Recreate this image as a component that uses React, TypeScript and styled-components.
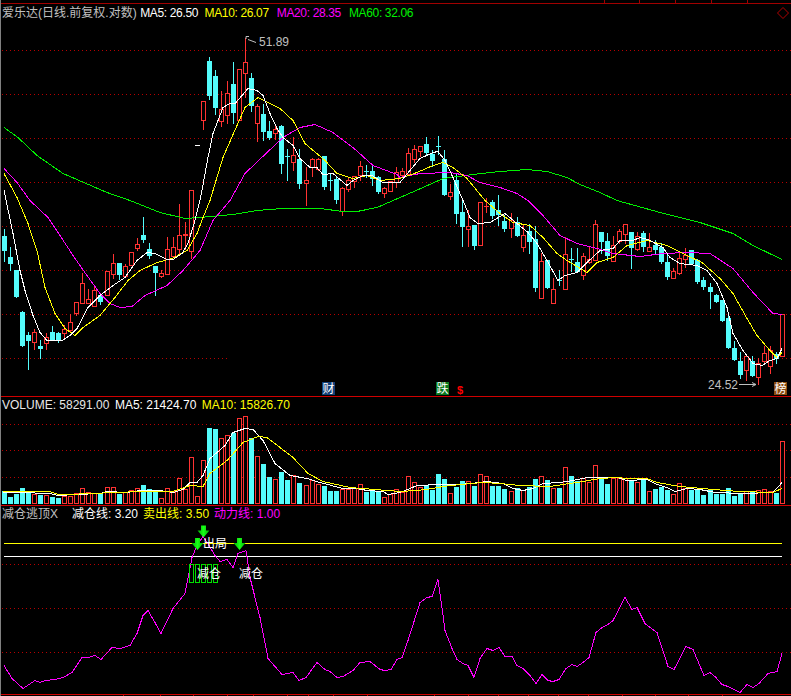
import styled, { createGlobalStyle } from "styled-components";

type Kind = "r" | "c" | "w";
type Candle = [Kind, number, number, number, number];
type Pt = [number, number];

const RED = "#ff3232";
const CYAN = "#54fcfc";
const GRID = "#b80000";
const UI_FONT = `"Liberation Sans", "Noto Sans CJK SC", sans-serif`;

// kind, body top, body bottom, wick top, wick bottom (page pixels)
const candles: Candle[] = [
  ["c",236,251,229,261],["c",257,264,247,270],["c",270,297,270,297],["c",312,346,311,346],["c",335,341,332,369],
  ["r",332,342,329,349],["c",346,349,340,358],["r",337,343,333,349],["c",332,340,326,340],["c",333,340,332,342],
  ["r",329,333,325,339],["r",322,330,314,332],["r",302,313,302,315],["r",283,303,273,303],["r",299,303,289,303],
  ["r",290,306,286,306],["c",295,302,293,304],["r",271,295,271,295],["r",263,274,254,278],["c",263,275,263,279],
  ["r",266,276,264,277],["r",252,265,252,265],["r",244,248,238,250],["c",235,240,217,242],["c",249,256,243,258],
  ["c",266,273,266,295],["r",273,276,270,277],["r",249,274,237,274],["r",247,256,237,257],["r",235,249,204,255],
  ["r",234,235,222,249],["r",190,251,190,258],["w",145,145,145,145],["r",101,120,101,129],["c",61,96,57,99],
  ["c",76,108,70,114],["r",109,121,91,126],["r",93,115,81,123],["c",84,113,62,123],["r",69,120,69,120],
  ["r",62,73,38,97],["c",78,106,73,111],["r",106,123,104,141],["c",114,132,104,140],["c",131,138,121,139],
  ["r",129,133,125,139],["c",126,164,125,173],["c",156,156,149,180],["r",155,162,137,170],["c",159,184,149,188],
  ["r",180,183,167,205],["r",159,167,158,176],["r",159,169,158,170],["c",156,187,156,189],["c",180,180,173,190],
  ["c",179,200,177,203],["r",188,211,187,215],["r",180,189,177,191],["r",176,181,176,187],["r",166,175,161,180],
  ["c",171,171,165,177],["c",171,179,165,185],["c",177,192,176,193],["r",188,193,187,197],["r",181,191,181,191],
  ["r",172,182,167,187],["r",171,175,168,177],["r",153,174,148,175],["r",149,159,145,162],["r",146,151,146,156],
  ["c",144,153,137,154],["c",154,161,150,166],["c",146,146,136,154],["c",159,195,150,195],["r",192,196,184,199],
  ["c",180,214,174,223],["c",212,227,200,246],["r",226,229,210,246],["c",225,246,225,249],["r",202,245,202,245],
  ["r",206,206,198,212],["c",202,216,200,218],["c",210,215,195,225],["c",221,229,215,231],["r",220,228,213,237],
  ["c",222,236,217,236],["r",235,247,224,251],["c",231,242,224,253],["c",239,288,226,291],["r",261,298,253,298],
  ["c",260,288,260,288],["r",289,303,278,303],["c",280,280,270,285],["r",254,289,237,289],["c",259,259,248,271],
  ["c",262,272,248,272],["r",256,275,253,279],["r",259,262,247,263],["r",224,260,220,260],["c",232,242,232,253],
  ["c",241,256,233,260],["r",245,261,236,261],["r",231,241,229,243],["r",224,234,224,243],["c",232,248,232,268],
  ["r",236,249,232,250],["c",233,247,231,251],["r",247,251,233,251],["c",245,250,240,253],["c",247,262,243,263],
  ["c",262,277,253,279],["r",271,278,268,278],["r",258,273,251,274],["r",255,259,248,267],["c",250,264,250,264],
  ["c",260,282,259,283],["c",280,287,277,289],["c",287,292,283,308],["c",295,302,294,302],["c",300,321,300,321],
  ["c",318,348,313,348],["c",348,360,341,360],["c",361,375,352,378],["r",356,370,354,380],["c",361,376,356,376],
  ["r",363,377,358,384],["r",353,361,346,363],["r",350,366,346,373],["c",354,359,352,363],["r",314,356,314,356],
];

// top of each volume bar
const volumeTops = [
  491,497,494,488,492,494,495,495,497,498,496,496,493,488,492,493,494,487,487,494,
  492,490,488,485,489,490,498,488,491,478,489,457,496,460,428,429,438,435,433,418,
  416,438,456,464,477,479,472,480,475,483,485,480,484,486,491,491,489,489,488,484,
  492,491,491,497,494,489,492,476,482,487,485,490,474,479,493,487,481,481,486,474,
  476,486,486,489,491,488,490,487,479,476,480,488,488,467,476,481,478,482,465,479,
  484,478,478,478,480,482,480,491,489,487,490,494,483,488,490,489,495,490,494,494,
  488,496,493,491,492,490,489,491,493,441,
];

const ma5: Pt[] = [[4,190],[13,233],[20,270],[25,290],[33,315],[40,332],[47,340],[62,340],[70,335],[77,328],[88,307],[100,295],[113,285],[125,277],[137,260],[147,252],[155,253],[167,259],[173,259],[182,253],[188,243],[195,220],[200,200],[202,190],[208,157],[213,133],[218,120],[223,107],[230,103],[235,103],[242,95],[248,88],[257,90],[263,95],[270,113],[277,128],[283,137],[293,145],[300,158],[310,167],[317,167],[323,174],[333,173],[347,185],[353,180],[363,175],[372,175],[383,182],[397,182],[400,182],[410,170],[420,158],[433,152],[438,151],[445,160],[453,177],[463,200],[470,217],[478,223],[490,222],[505,213],[517,223],[528,232],[537,243],[547,260],[558,280],[565,275],[577,272],[587,262],[600,250],[613,248],[620,240],[633,240],[640,237],[648,239],[663,247],[670,257],[680,263],[697,265],[707,270],[717,283],[727,307],[733,333],[743,350],[753,363],[762,365],[770,360],[777,358],[782,348]];
const ma10: Pt[] = [[4,173],[17,197],[28,223],[37,250],[45,287],[55,313],[65,328],[75,335],[83,327],[100,315],[115,297],[128,280],[140,270],[157,262],[172,258],[187,250],[197,233],[203,217],[210,200],[213,190],[223,157],[237,125],[245,107],[258,97],[270,103],[280,108],[293,120],[305,143],[325,160],[337,173],[353,178],[367,175],[380,180],[400,178],[417,172],[433,165],[443,162],[453,167],[467,178],[485,200],[500,213],[513,222],[530,225],[543,237],[557,253],[567,260],[587,272],[597,262],[613,257],[627,245],[647,240],[667,245],[687,255],[702,262],[720,278],[733,293],[747,318],[757,335],[770,350],[777,357],[782,352]];
const ma20: Pt[] = [[4,168],[17,182],[30,200],[48,217],[60,235],[75,258],[87,275],[100,293],[110,303],[120,307],[132,306],[145,295],[167,285],[183,270],[200,250],[213,220],[230,200],[245,173],[267,152],[283,137],[300,127],[315,124],[333,132],[353,147],[373,165],[397,174],[400,177],[420,173],[450,172],[467,175],[480,182],[500,187],[517,193],[528,200],[543,215],[560,235],[577,243],[597,248],[613,253],[640,256],[663,253],[687,252],[710,253],[733,268],[753,292],[773,313],[782,314]];
const ma60: Pt[] = [[4,127],[18,137],[37,155],[63,173],[107,192],[130,200],[160,212],[185,218],[200,217],[233,214],[257,210],[283,208],[320,208],[343,211],[357,211],[377,207],[400,197],[423,187],[443,178],[473,174],[500,171],[527,169],[547,171],[567,177],[580,184],[600,192],[617,200],[660,212],[700,222],[733,233],[753,245],[782,259]];

const volMa5: Pt[] = [[3,492],[20,492],[50,493],[58,495],[77,494],[100,493],[107,491],[127,492],[140,490],[160,490],[173,492],[183,489],[190,482],[197,482],[203,475],[210,458],[217,452],[225,445],[233,432],[245,428],[253,429],[263,440],[275,463],[290,475],[307,478],[320,482],[343,488],[357,488],[367,490],[383,491],[388,494],[400,492],[410,488],[417,485],[440,484],[460,484],[480,482],[487,481],[503,483],[513,488],[523,490],[533,488],[543,483],[560,482],[573,480],[587,477],[600,477],[617,477],[627,480],[647,479],[657,484],[667,487],[675,491],[687,488],[700,489],[715,492],[743,493],[773,492],[782,482]];
const volMa10: Pt[] = [[3,491],[50,491],[58,494],[100,493],[107,492],[150,491],[173,491],[190,485],[203,486],[210,473],[227,460],[243,442],[258,436],[267,437],[280,447],[293,457],[308,473],[323,481],[350,487],[400,491],[417,490],[433,488],[443,486],[460,484],[483,482],[500,483],[520,485],[550,486],[563,484],[583,481],[600,478],[617,477],[627,478],[647,478],[657,482],[680,486],[713,489],[740,491],[773,492],[782,488]];

const power: Pt[] = [[4,665],[12,678],[23,688],[35,680],[40,682],[45,680],[55,679],[63,677],[72,672],[82,657],[88,657],[95,655],[101,659],[112,647],[120,648],[130,645],[137,633],[143,615],[148,610],[155,622],[161,633],[173,608],[185,593],[192,557],[197,545],[203,536],[209,545],[215,555],[220,561],[227,559],[233,567],[238,553],[246,550],[250,577],[260,617],[268,658],[282,674],[293,672],[299,680],[306,677],[317,662],[325,669],[330,671],[337,677],[343,676],[353,670],[360,662],[370,661],[380,669],[385,670],[391,669],[397,659],[402,657],[408,640],[420,602],[427,597],[432,596],[438,579],[442,607],[445,630],[452,648],[457,659],[463,663],[468,665],[474,677],[480,658],[487,648],[493,650],[499,647],[505,656],[512,656],[517,665],[523,668],[530,675],[536,683],[542,674],[548,680],[553,681],[559,679],[566,668],[572,664],[577,666],[583,662],[589,657],[596,632],[602,627],[608,624],[613,620],[625,597],[632,609],[637,607],[645,623],[657,632],[668,666],[674,669],[686,646],[693,649],[704,675],[710,672],[716,677],[722,684],[728,686],[740,692],[747,684],[753,687],[759,683],[768,673],[777,671],[782,653]];

const monthTicks = [123,160,193,227,253,287,308,333,367,434,468,498,528,558,588,622,655,688,722];

const GlobalStyle = createGlobalStyle`
  html, body {
    margin: 0;
    background: #000;
  }
`;

const Screen = styled.div`
  width: 791px;
  height: 696px;
  box-sizing: border-box;
  border-left: 1px solid #808080;
  background: #000;
  overflow: hidden;
  display: flex;
  flex-direction: column;
  font-family: ${UI_FONT};
  font-size: 12px;
`;

const TopRule = styled.svg`
  display: block;
  width: 790px;
  height: 4px;
  flex: none;
`;

const Panel = styled.section`
  flex: none;
  display: flex;
  flex-direction: column;
  border-bottom: 1px solid #d00000;
`;

const Legend = styled.div<{ $height: number; $gap: number }>`
  height: ${(p) => p.$height}px;
  flex: none;
  display: flex;
  align-items: center;
  gap: ${(p) => p.$gap}px;
  padding-left: 1px;
  white-space: nowrap;
`;

const LegendItem = styled.span<{ $color: string; $tight?: boolean; $inset?: number }>`
  color: ${(p) => p.$color};
  letter-spacing: ${(p) => (p.$tight ? "-0.35px" : "0")};
  margin-left: ${(p) => p.$inset ?? 0}px;
  line-height: 14px;
`;

const CornerMark = styled.svg`
  width: 12px;
  height: 12px;
  margin-left: auto;
  margin-right: 2px;
  flex: none;
`;

const Chart = styled.svg`
  display: block;
  width: 790px;
  flex: none;
`;

const BottomTicks = styled.svg`
  display: block;
  width: 790px;
  height: 1px;
  flex: none;
`;

const Wick = styled.rect<{ $color: string }>`
  fill: ${(p) => p.$color};
  shape-rendering: crispEdges;
`;

const Trace = styled.polyline<{ $color: string }>`
  fill: none;
  stroke: ${(p) => p.$color};
  stroke-width: 1;
  shape-rendering: crispEdges;
`;

const DotLine = styled.line`
  stroke: ${GRID};
  stroke-width: 1;
  stroke-dasharray: 1 3;
  shape-rendering: crispEdges;
`;

const ChartText = styled.text<{ $color: string; $size?: number }>`
  fill: ${(p) => p.$color};
  font-family: ${UI_FONT};
  font-size: ${(p) => p.$size ?? 12}px;
`;

const xOf = (i: number) => Math.round(2 + 6.03 * i);
const pts = (list: Pt[]) => list.map((p) => `${p[0]},${p[1] + 0.5}`).join(" ");

function HollowBar({ x, top, bottom, color }: { x: number; top: number; bottom: number; color: string }) {
  return <rect x={x + 0.5} y={top + 0.5} width={4} height={bottom - top} fill="#000" stroke={color} shapeRendering="crispEdges" />;
}

function CandleMark({ c, i }: { c: Candle; i: number }) {
  const [kind, top, bottom, high, low] = c;
  const x = xOf(i);
  const color = kind === "r" ? RED : kind === "c" ? CYAN : "#ffffff";
  return (
    <g>
      {low > high && <Wick $color={color} x={x + 2} y={high} width={1} height={low - high + 1} />}
      {bottom - top <= 0 ? (
        <Wick $color={color} x={x} y={top} width={5} height={1} />
      ) : kind === "r" ? (
        <HollowBar x={x} top={top} bottom={bottom} color={color} />
      ) : (
        <Wick $color={color} x={x} y={top} width={5} height={bottom - top} />
      )}
    </g>
  );
}

function Grid({ rows }: { rows: number[] }) {
  return (
    <>
      {rows.map((y) => (
        <DotLine key={y} x1={2} x2={791} y1={y + 0.5} y2={y + 0.5} />
      ))}
    </>
  );
}

function Badge({ x, label, color }: { x: number; label: string; color: string }) {
  return (
    <g>
      <rect x={x} y={382} width={13} height={13} fill={color} />
      <ChartText $color="#ffffff" x={x + 0.5} y={393}>{label}</ChartText>
    </g>
  );
}

function DownArrow({ cx, y }: { cx: number; y: number }) {
  return (
    <polygon
      fill="url(#arrowFill)"
      points={`${cx - 2.5},${y} ${cx + 2.5},${y} ${cx + 2.5},${y + 5} ${cx + 6},${y + 5} ${cx},${y + 12} ${cx - 6},${y + 5} ${cx - 2.5},${y + 5}`}
    />
  );
}

function PriceChart() {
  return (
    <Chart viewBox="1 22 790 374" height={374}>
      <Grid rows={[50, 94, 138, 182, 226, 270, 314]} />
      <DotLine x1={2} x2={228} y1={358.5} y2={358.5} />
      <DotLine x1={562} x2={791} y1={358.5} y2={358.5} />
      {candles.map((c, i) => (
        <CandleMark key={i} c={c} i={i} />
      ))}
      <Trace $color="#00f000" points={pts(ma60)} />
      <Trace $color="#ff00ff" points={pts(ma20)} />
      <Trace $color="#ffff00" points={pts(ma10)} />
      <Trace $color="#ffffff" points={pts(ma5)} />

      <path d="M246 39V36.5H249M248 39.5L256 42.5" fill="none" stroke="#c0c0c0" />
      <ChartText $color="#c0c0c0" x={259} y={46}>51.89</ChartText>
      <path d="M739 384.5H756M752 382.5L756 384.5L752 386.5" fill="none" stroke="#c0c0c0" />
      <ChartText $color="#c0c0c0" x={708} y={389}>24.52</ChartText>

      <Badge x={322} label="财" color="#123f78" />
      <Badge x={436} label="跌" color="#0a7a1e" />
      <Badge x={774} label="榜" color="#8a4b10" />
      <ChartText $color="#ff0000" $size={11} x={457} y={394} fontWeight="bold">$</ChartText>
    </Chart>
  );
}

function VolumeChart() {
  return (
    <Chart viewBox="1 412 790 93" height={93}>
      <Grid rows={[424, 450, 477]} />
      {volumeTops.map((top, i) =>
        candles[i][0] === "c" ? (
          <Wick key={i} $color={CYAN} x={xOf(i)} y={top} width={5} height={504 - top} />
        ) : (
          <HollowBar key={i} x={xOf(i)} top={top} bottom={503} color={RED} />
        ),
      )}
      <Trace $color="#ffffff" points={pts(volMa5)} />
      <Trace $color="#ffff00" points={pts(volMa10)} />
    </Chart>
  );
}

function SignalChart() {
  return (
    <Chart viewBox="1 522 790 172" height={172}>
      <defs>
        <linearGradient id="arrowFill" x1="0" x2="1" y1="0" y2="0">
          <stop offset="0" stopColor="#00b000" />
          <stop offset="0.5" stopColor="#18ff18" />
          <stop offset="1" stopColor="#00b000" />
        </linearGradient>
      </defs>
      <Grid rows={[564, 608, 652]} />
      <Trace $color="#ffff00" points="4,543.5 782,543.5" />
      <Trace $color="#ffffff" points="4,556.5 782,556.5" />
      <Trace $color="#ff00ff" points={pts(power)} />
      {[189, 195, 201, 207, 213].map((x) => (
        <rect key={x} x={x + 0.5} y={564.5} width={4} height={18} fill="none" stroke="#00e000" shapeRendering="crispEdges" />
      ))}
      <DownArrow cx={203.5} y={525.5} />
      <DownArrow cx={197.5} y={538} />
      <DownArrow cx={239.5} y={538} />
      <ChartText $color="#ffffff" x={203} y={548}>出局</ChartText>
      <ChartText $color="#ffffff" x={197} y={578}>减仓</ChartText>
      <ChartText $color="#ffffff" x={239} y={578}>减仓</ChartText>
    </Chart>
  );
}

export default function App() {
  return (
    <>
      <GlobalStyle />
      <Screen>
        <TopRule viewBox="1 0 790 4">
          <rect x={1} y={3} width={790} height={1} fill="#a00000" />
          {[604, 639, 675, 711, 747].map((x) => (
            <rect key={x} x={x} y={0} width={1} height={3} fill="#a00000" />
          ))}
        </TopRule>
        <Panel>
          <Legend $height={18} $gap={8}>
            <LegendItem $color="#c0c0c0">爱乐达(日线.前复权.对数)</LegendItem>
            <LegendItem $color="#ffffff" $tight $inset={-4.5}>MA5: 26.50</LegendItem>
            <LegendItem $color="#ffff00" $tight $inset={-1.5}>MA10: 26.07</LegendItem>
            <LegendItem $color="#ff00ff" $tight>MA20: 28.35</LegendItem>
            <LegendItem $color="#00f000" $tight>MA60: 32.06</LegendItem>
            <CornerMark viewBox="0 0 12 12">
              <path d="M6 .5L11.5 6L6 11.5L.5 6Z" fill="none" stroke="#b00000" />
            </CornerMark>
          </Legend>
          <PriceChart />
        </Panel>
        <Panel>
          <Legend $height={15} $gap={5.5}>
            <LegendItem $color="#e8e8e8">VOLUME: 58291.00</LegendItem>
            <LegendItem $color="#ffffff">MA5: 21424.70</LegendItem>
            <LegendItem $color="#ffff00">MA10: 15826.70</LegendItem>
          </Legend>
          <VolumeChart />
        </Panel>
        <Panel>
          <Legend $height={16} $gap={5}>
            <LegendItem $color="#c0c0c0">减仓逃顶X</LegendItem>
            <LegendItem $color="#ffffff" $inset={9}>减仓线: 3.20</LegendItem>
            <LegendItem $color="#ffff00">卖出线: 3.50</LegendItem>
            <LegendItem $color="#ff00ff">动力线: 1.00</LegendItem>
          </Legend>
          <SignalChart />
        </Panel>
        <BottomTicks viewBox="1 0 790 1">
          {monthTicks.map((x) => (
            <rect key={x} x={x} y={0} width={1} height={1} fill="#d00000" />
          ))}
        </BottomTicks>
      </Screen>
    </>
  );
}
